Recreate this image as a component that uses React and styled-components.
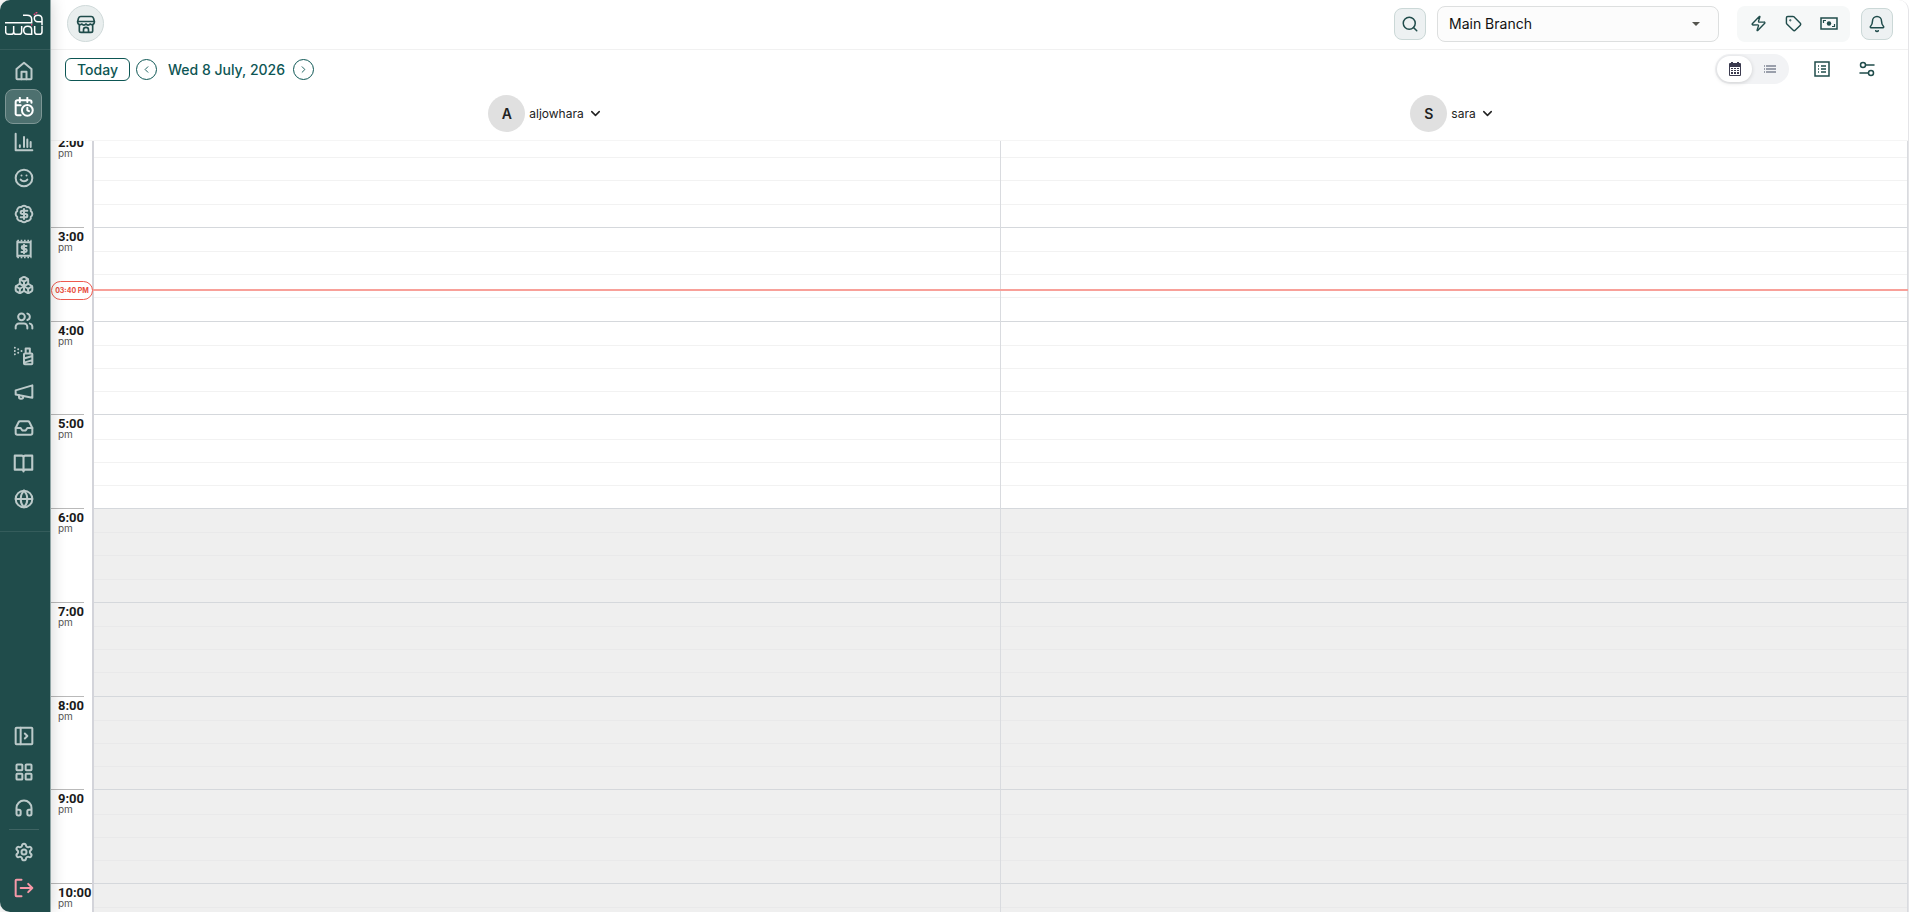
import { Fragment } from "react";
import styled, { createGlobalStyle, css } from "styled-components";
import {
  Smile,
  BadgeDollarSign,
  Boxes,
  Users,
  Inbox,
  Globe,
  LayoutGrid,
  Headphones,
  Settings,
  Search,
  Zap,
  Tag,
  Bell,
  ChevronLeft,
  ChevronRight,
  ChevronDown,
} from "lucide-react";

const HOURS = ["2:00", "3:00", "4:00", "5:00", "6:00", "7:00", "8:00", "9:00", "10:00"];
const CLOSING_INDEX = 4;
const STAFF = ["aljowhara", "sara"];

function Svg({ size = 20, width = 2.4, children }) {
  return (
    <svg
      width={size}
      height={size}
      viewBox="0 0 24 24"
      fill="none"
      stroke="currentColor"
      strokeWidth={width}
      strokeLinecap="round"
      strokeLinejoin="round"
      aria-hidden="true"
    >
      {children}
    </svg>
  );
}

const HomeIcon = () => (
  <Svg>
    <path d="M3 9.5 12 2l9 7.5V21a1 1 0 0 1-1 1H4a1 1 0 0 1-1-1z" />
    <path d="M9 22v-9h6v9" />
  </Svg>
);

const CalendarClockIcon = () => (
  <Svg>
    <path d="M8 22H4a2 2 0 0 1-2-2V6a2 2 0 0 1 2-2h15a2 2 0 0 1 2 2v1" />
    <path d="M7 1v5M16 1v5M3 10h5" />
    <circle cx="16" cy="16" r="6.5" />
    <path d="M16 13v3l2 1" />
  </Svg>
);

const ChartIcon = () => (
  <Svg>
    <path d="M2 2v20h20" />
    <path d="M7 18v-2M12 18V6M16 18V9M20 18v-6" />
  </Svg>
);

const ReceiptIcon = () => (
  <Svg>
    <path d="M4 3v18M20 3v18M4 4h16M4 20h16" />
    <path d="M4 2h17M4 22h17" strokeWidth="2" strokeLinecap="butt" strokeDasharray="2 2" />
    <path d="M15 8.5h-4a1.7 1.7 0 0 0 0 3.5h2.5a1.7 1.7 0 0 1 0 3.5H9M12 7v10" />
  </Svg>
);

const SprayIcon = () => (
  <Svg>
    <path d="M13 9h8a1 1 0 0 1 1 1v11a1 1 0 0 1-1 1h-8a1 1 0 0 1-1-1V10a1 1 0 0 1 1-1zM14 9V3h5v6M12 15l10-3M12 20l10-3" />
    <path d="M1 2h.01M1 6h.01M1 10h.01M5 4h.01M5 8h.01M9 6h.01" />
  </Svg>
);

const MegaphoneIcon = () => (
  <Svg>
    <path d="M2 10 22 4v15L2 15z" />
    <path d="M6 16v2a2 2 0 0 0 2 2h1a2 2 0 0 0 2-2v-1" />
  </Svg>
);

const BookIcon = () => (
  <Svg size={21}>
    <path d="M12 5v15M12 5a2 2 0 0 0-2-2H2v16h8a2 2 0 0 1 2 2 2 2 0 0 1 2-2h8V3h-8a2 2 0 0 0-2 2z" />
  </Svg>
);

const PanelIcon = () => (
  <Svg>
    <rect x="2" y="2" width="20" height="20" rx="1" />
    <path d="M8 2v20M13 9l3 3-3 3" />
  </Svg>
);

const LogoutIcon = () => (
  <Svg>
    <path d="M9 2H3a1 1 0 0 0-1 1v18a1 1 0 0 0 1 1h6M8 12h14M17 7l5 5-5 5" />
  </Svg>
);

const StoreIcon = () => (
  <Svg width={2}>
    <path d="M6 3h12a3 3 0 0 1 3 2l1 4H2l1-4a3 3 0 0 1 3-2z" />
    <path d="M2 9v1a3 3 0 0 0 5 2 3 3 0 0 0 5 0 3 3 0 0 0 5 0 3 3 0 0 0 5-2V9" />
    <path d="M4 13v7a2 2 0 0 0 2 2h12a2 2 0 0 0 2-2v-7M9 22v-3a3 3 0 0 1 6 0v3" />
  </Svg>
);

const CashIcon = () => (
  <svg width="18" height="14" viewBox="0 0 18 14" fill="none" stroke="currentColor" strokeWidth="1.5" aria-hidden="true">
    <path d="M1 1h16v11H1z" />
    <circle cx="9" cy="6.5" r="2.2" fill="currentColor" stroke="none" />
    <path d="M3.500 6V3.500H6M14.500 7v2.500H12" strokeWidth="1.2" />
  </svg>
);

const CalendarSolidIcon = () => (
  <svg width="14" height="14" viewBox="0 0 14 14" fill="currentColor" aria-hidden="true">
    <path
      fillRule="evenodd"
      d="M3 0h2v1h4V0h2v1h1a1 1 0 0 1 1 1v11a1 1 0 0 1-1 1H2a1 1 0 0 1-1-1V2a1 1 0 0 1 1-1h1zM2 5v8h10V5z"
    />
    <path d="M3 6h2v1H3zM6 6h2v1H6zM9 6h2v1H9zM3 8h2v1H3zM6 8h2v1H6zM9 8h2v1H9zM3 10h2v2H3zM6 10h2v2H6zM9 10h2v2H9z" />
  </svg>
);

const ListIcon = () => (
  <svg width="12" height="8" viewBox="0 0 12 8" fill="currentColor" aria-hidden="true">
    <path d="M0 0h1v2H0zM2 0h10v2H2zM0 3h1v2H0zM2 3h10v2H2zM0 6h1v2H0zM2 6h10v2H2z" />
  </svg>
);

const TableIcon = () => (
  <svg width="16" height="16" viewBox="0 0 16 16" fill="none" stroke="currentColor" strokeWidth="1.5" aria-hidden="true">
    <path d="M1 1h14v14H1z" />
    <path d="M4 5h1M7 5h5M4 8h1M7 8h5M4 11h1M7 11h5" />
  </svg>
);

const FiltersIcon = () => (
  <svg width="16" height="16" viewBox="0 0 16 16" fill="none" stroke="currentColor" strokeWidth="1.5" strokeLinecap="round" aria-hidden="true">
    <circle cx="4" cy="4" r="2.5" />
    <path d="M7 4h8M1 12h8" />
    <circle cx="12" cy="12" r="2.5" />
  </svg>
);

const Logo = () => (
  <svg width="38" height="24" viewBox="0 0 114 72" fill="none" stroke="#fff" strokeWidth="4.5" aria-hidden="true">
    <path d="M0 32h80V22C80 14 74 10 66 10H54" />
    <path d="M111 40V22c0-7-5-12-12-12s-11 4-11 9 4 10 10 10h12" />
    <path d="M2 42v17c0 5 3 8 8 8h8c5 0 8-3 8-8V42M26 59c0 5 3 8 8 8h8c5 0 8-3 8-8V42" />
    <path d="M80 69V54c0-7-5-11-12-11s-12 5-12 12 5 12 12 12h12" />
    <path d="M111 42v17c0 5-3 8-8 8h-6c-5 0-8-3-8-8V42" />
    <path d="M86 8l5-2M92 3l5-2M78 38h4" stroke="#e8487c" />
  </svg>
);

const MAIN_NAV = [
  ["Home", HomeIcon],
  ["Calendar", CalendarClockIcon],
  ["Reports", ChartIcon],
  ["Clients", Smile],
  ["Sales", BadgeDollarSign],
  ["Invoices", ReceiptIcon],
  ["Inventory", Boxes],
  ["Team", Users],
  ["Services", SprayIcon],
  ["Marketing", MegaphoneIcon],
  ["Inbox", Inbox],
  ["Catalogue", BookIcon],
  ["Online booking", Globe],
];

function App() {
  return (
    <Shell>
      <GlobalStyle />
      <Sidebar>
        <LogoBox href="#" aria-label="Home page">
          <Logo />
        </LogoBox>
        <MainNav aria-label="Main">
          {MAIN_NAV.map(([label, Icon]) => (
            <NavLink key={label} href="#" aria-label={label} $active={label === "Calendar"}>
              <Icon size={20} strokeWidth={2.4} />
            </NavLink>
          ))}
        </MainNav>
        <BottomNav aria-label="Account">
          <NavLink href="#" aria-label="Expand">
            <PanelIcon />
          </NavLink>
          <NavLink href="#" aria-label="Apps">
            <LayoutGrid size={20} strokeWidth={2.4} />
          </NavLink>
          <NavLink href="#" aria-label="Support">
            <Headphones size={20} strokeWidth={2.4} />
          </NavLink>
          <NavDivider />
          <NavLink href="#" aria-label="Settings">
            <Settings size={20} strokeWidth={2.4} />
          </NavLink>
          <NavLink href="#" aria-label="Log out" $danger>
            <LogoutIcon />
          </NavLink>
        </BottomNav>
      </Sidebar>

      <Main>
        <TopBar>
          <StoreButton aria-label="Store">
            <StoreIcon />
          </StoreButton>
          <TopActions>
            <SquareButton aria-label="Search">
              <Search size={18} />
            </SquareButton>
            <BranchField>
              <BranchSelect aria-label="Branch" defaultValue="main">
                <option value="main">Main Branch</option>
              </BranchSelect>
              <Caret />
            </BranchField>
            <QuickActions>
              <IconButton aria-label="Quick sale">
                <Zap size={17} />
              </IconButton>
              <IconButton aria-label="Offers">
                <Tag size={17} />
              </IconButton>
              <IconButton aria-label="Cash">
                <CashIcon />
              </IconButton>
            </QuickActions>
            <SquareButton aria-label="Notifications">
              <Bell size={18} />
            </SquareButton>
          </TopActions>
        </TopBar>

        <DateBar>
          <TodayButton>Today</TodayButton>
          <RoundButton aria-label="Previous day">
            <ChevronLeft size={11} />
          </RoundButton>
          <DateLabel>Wed 8 July, 2026</DateLabel>
          <RoundButton aria-label="Next day">
            <ChevronRight size={11} />
          </RoundButton>
          <ViewActions>
            <Segmented>
              <Segment aria-label="Calendar view" $active>
                <CalendarSolidIcon />
              </Segment>
              <Segment aria-label="List view">
                <ListIcon />
              </Segment>
            </Segmented>
            <IconButton aria-label="Waiting list">
              <TableIcon />
            </IconButton>
            <IconButton aria-label="Filters">
              <FiltersIcon />
            </IconButton>
          </ViewActions>
        </DateBar>

        <StaffRow>
          {STAFF.map((name) => (
            <StaffCell key={name}>
              <StaffButton>
                <Avatar>{name[0].toUpperCase()}</Avatar>
                {name}
                <ChevronDown size={15} strokeWidth={2.4} />
              </StaffButton>
            </StaffCell>
          ))}
        </StaffRow>

        <Scroller>
          <Timeline>
            {HOURS.map((hour, i) => (
              <Fragment key={hour}>
                <HourLabel>
                  <HourMark>
                    <strong>{hour}</strong>
                    <small>pm</small>
                  </HourMark>
                </HourLabel>
                {STAFF.map((name) => (
                  <HourCell key={name} $closed={i >= CLOSING_INDEX}>
                    <Slot />
                    <Slot />
                    <Slot />
                    <Slot />
                  </HourCell>
                ))}
              </Fragment>
            ))}
            <NowLine>
              <NowBadge>03:40 PM</NowBadge>
            </NowLine>
          </Timeline>
        </Scroller>
      </Main>
    </Shell>
  );
}

export default App;

const GlobalStyle = createGlobalStyle`
  * {
    box-sizing: border-box;
  }
  body {
    margin: 0;
    background: #fff;
    color: #1a1a1a;
    font-family: Inter, "Liberation Sans", sans-serif;
  }
  button, select {
    font-family: inherit;
    cursor: pointer;
  }
`;

const Shell = styled.div`
  display: flex;
  height: 100vh;
  padding-right: 2px;
  overflow: hidden;
`;

const Sidebar = styled.aside`
  display: flex;
  flex-direction: column;
  flex: none;
  width: 51px;
  background: #204c4b;
  border-right: 1px solid #8fa5a5;
  border-radius: 10px 0 0 10px;
  box-shadow: 0 0 16px rgba(0, 0, 0, 0.18);
  z-index: 2;
`;

const LogoBox = styled.a`
  display: flex;
  height: 50px;
  padding: 0 0 2px 5px;
  align-items: center;
  border-bottom: 1px solid #345c5b;
`;

const MainNav = styled.nav`
  display: flex;
  flex-direction: column;
  justify-content: space-between;
  height: 482px;
  padding: 3px 8px 14px 5px;
  border-bottom: 1px solid #345c5b;
`;

const BottomNav = styled.nav`
  display: flex;
  flex-direction: column;
  margin-top: auto;
  padding: 0 8px 6px 5px;
`;

const NavLink = styled.a`
  display: flex;
  align-items: center;
  justify-content: center;
  height: 36px;
  color: #bccaca;
  border-radius: 8px;
  ${({ $active }) =>
    $active &&
    css`
      color: #fff;
      background: #4d706f;
      border: 1px solid #7d9695;
    `}
  ${({ $danger }) =>
    $danger &&
    css`
      color: #f799a8;
    `}
`;

const NavDivider = styled.hr`
  width: 30px;
  margin: 3px 0 4px 4px;
  border: none;
  border-top: 1px solid #3f6463;
`;

const Main = styled.main`
  display: flex;
  flex-direction: column;
  flex: 1;
  min-width: 0;
  border-right: 1px solid #e4e4e7;
  border-top-right-radius: 10px;
`;

const TopBar = styled.header`
  display: flex;
  align-items: center;
  justify-content: space-between;
  flex: none;
  height: 50px;
  padding: 0 15px 2px 16px;
  border-bottom: 1px solid #f1f1f1;
`;

const StoreButton = styled.button`
  display: flex;
  align-items: center;
  justify-content: center;
  width: 37px;
  height: 37px;
  padding: 0;
  color: #204c4b;
  background: #e9eeee;
  border: 1px solid #d0dada;
  border-radius: 50%;
`;

const TopActions = styled.div`
  display: flex;
  align-items: center;
`;

const SquareButton = styled.button`
  display: flex;
  align-items: center;
  justify-content: center;
  width: 32px;
  height: 32px;
  padding: 0;
  color: #204c4b;
  background: #edf1f2;
  border: 1px solid #cbd8d7;
  border-radius: 8px;
`;

const BranchField = styled.div`
  display: grid;
  align-items: center;
  width: 282px;
  margin: 0 18px 0 11px;
  > * {
    grid-area: 1 / 1;
  }
`;

const BranchSelect = styled.select`
  width: 100%;
  height: 36px;
  padding: 0 11px;
  appearance: none;
  color: #111;
  font-size: 14px;
  background: #fcfcfc;
  border: 1px solid #dddfdf;
  border-radius: 8px;
`;

const Caret = styled.span`
  justify-self: end;
  margin-right: 19px;
  border: 4px solid transparent;
  border-top-color: #55554f;
  border-bottom: none;
  pointer-events: none;
`;

const QuickActions = styled.div`
  display: flex;
  align-items: center;
  justify-content: space-around;
  width: 113px;
  height: 36px;
  margin-right: 11px;
  padding: 0 4px;
  background: #f6f8f8;
  border-radius: 8px;
`;

const IconButton = styled.button`
  display: flex;
  align-items: center;
  justify-content: center;
  width: 24px;
  height: 24px;
  padding: 0;
  color: #204c4b;
  background: none;
  border: none;
`;

const DateBar = styled.div`
  display: flex;
  align-items: center;
  flex: none;
  height: 38px;
  padding: 0 29px 0 14px;
`;

const TodayButton = styled.button`
  width: 65px;
  height: 23px;
  margin-right: 6px;
  padding: 0;
  color: #0d5654;
  font-size: 14px;
  font-weight: 500;
  background: #fff;
  border: 1px solid #0d5654;
  border-radius: 6px;
`;

const RoundButton = styled.button`
  display: flex;
  align-items: center;
  justify-content: center;
  width: 21px;
  height: 21px;
  padding: 0;
  color: #0d5654;
  background: #fff;
  border: 1px solid #0d5654;
  border-radius: 50%;
`;

const DateLabel = styled.span`
  margin: 0 8px 0 11px;
  color: #0d5654;
  font-size: 14px;
  font-weight: 500;
`;

const ViewActions = styled.div`
  display: flex;
  align-items: center;
  gap: 21px;
  margin-left: auto;
`;

const Segmented = styled.div`
  display: flex;
  align-items: center;
  width: 74px;
  height: 30px;
  padding: 2px;
  background: #f2f3f5;
  border-radius: 15px;
`;

const Segment = styled.button`
  display: flex;
  align-items: center;
  justify-content: center;
  flex: 1;
  height: 26px;
  padding: 0;
  color: #9a9fab;
  background: none;
  border: none;
  border-radius: 13px;
  ${({ $active }) =>
    $active &&
    css`
      color: #3b3b4f;
      background: #fff;
      box-shadow: 0 1px 4px rgba(0, 0, 0, 0.15);
    `}
`;

const StaffRow = styled.div`
  display: grid;
  grid-template-columns: 1fr 1fr;
  flex: none;
  height: 53px;
  padding-left: 43px;
  border-bottom: 1px solid #f5f5f5;
`;

const StaffCell = styled.div`
  display: flex;
  align-items: center;
  justify-content: center;
`;

const StaffButton = styled.button`
  display: flex;
  align-items: center;
  gap: 4px;
  padding: 0 4px 1px 0;
  color: #222;
  font-size: 12px;
  background: none;
  border: none;
`;

const Avatar = styled.span`
  display: flex;
  align-items: center;
  justify-content: center;
  width: 37px;
  height: 37px;
  font-size: 14px;
  font-weight: 600;
  background: #e0e0e0;
  border-radius: 50%;
`;

const Scroller = styled.div`
  flex: 1;
  min-height: 0;
  overflow: hidden;
`;

const Timeline = styled.div`
  position: relative;
  display: grid;
  grid-template-columns: 43px 1fr 1fr;
  grid-template-rows: repeat(9, 1fr);
  height: 844px;
  margin-top: -8px;
`;

const HourLabel = styled.div`
  border-right: 2px solid #d3d4da;
`;

const HourMark = styled.div`
  display: flex;
  flex-direction: column;
  width: fit-content;
  padding: 2px 0 0 7px;
  border-top: 1px solid #b9b9b9;
  strong {
    font-family: Roboto, sans-serif;
    font-size: 13px;
    line-height: 13px;
    font-weight: 700;
  }
  small {
    color: #555;
    font-size: 10px;
    line-height: 8px;
  }
`;

const HourCell = styled.div`
  display: grid;
  grid-template-rows: repeat(4, 1fr);
  color: ${({ $closed }) => ($closed ? "#e9e9ea" : "#f2f2f2")};
  background: ${({ $closed }) => ($closed ? "#efefef" : "#fff")};
  border-top: 1px solid #d5d8dc;
  border-right: 1px solid #d9dbdf;
`;

const Slot = styled.div`
  & + & {
    border-top: 1px solid currentColor;
  }
`;

const NowLine = styled.div`
  position: absolute;
  top: 156px;
  left: 0;
  right: 0;
  display: flex;
  height: 2px;
  align-items: center;
  background: linear-gradient(#f8a099, #f8a099) right / calc(100% - 42px) 100% no-repeat;
`;

const NowBadge = styled.span`
  width: 42px;
  color: #e74c3c;
  font-size: 7px;
  line-height: 17px;
  font-weight: 700;
  text-align: center;
  white-space: nowrap;
  background: #fff;
  border: 1px solid #ee5a4f;
  border-radius: 10px;
`;
